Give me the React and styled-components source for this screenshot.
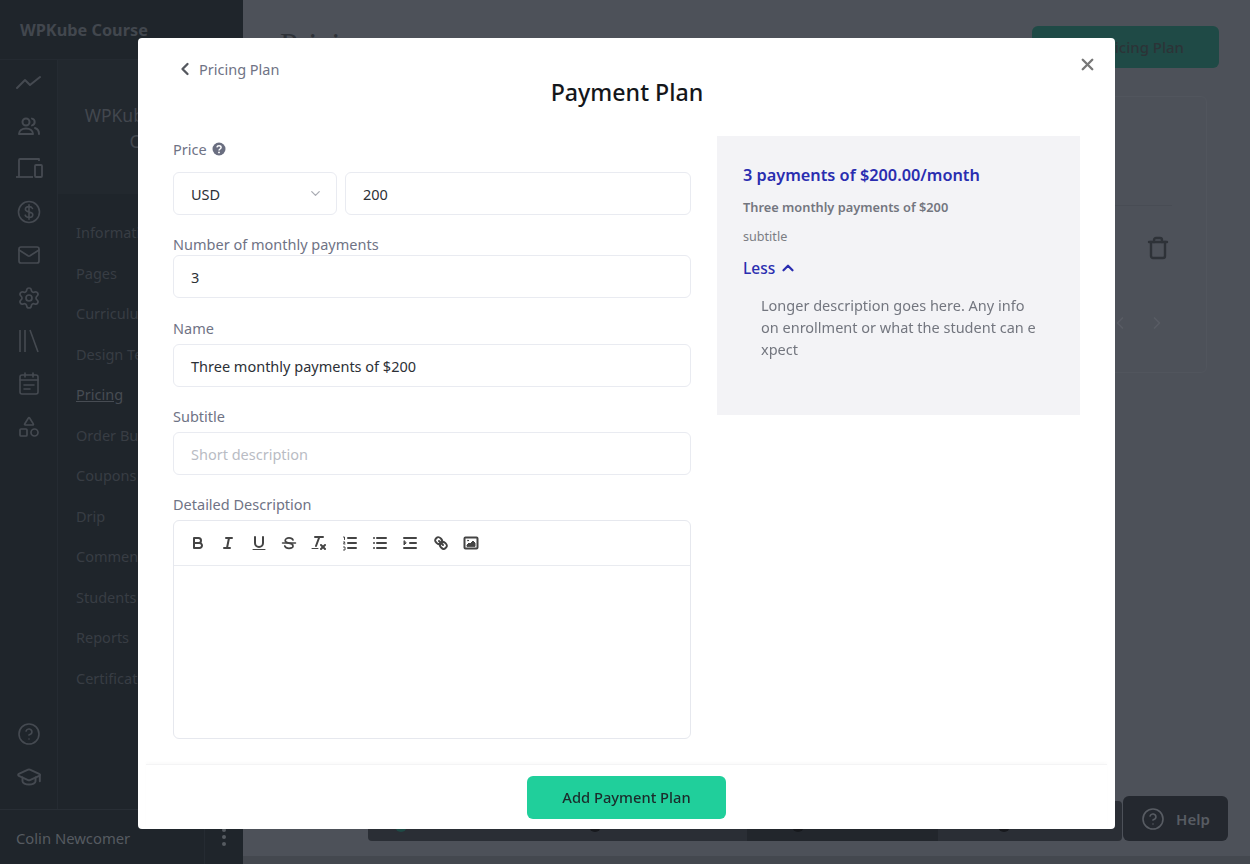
import React from 'react';
import styled, { createGlobalStyle } from 'styled-components';
import {
  ChevronDown,
  ChevronLeft,
  ChevronRight,
  ChevronUp,
  CircleHelp,
  GraduationCap,
  Mail,
  Settings,
  Shapes,
  Trash,
  X,
} from 'lucide-react';

const GlobalStyle = createGlobalStyle`
  * { box-sizing: border-box; }
  html, body { margin: 0; height: 100%; overflow: hidden; }
  body { font-family: 'Noto Sans', 'Open Sans', sans-serif; background: #4d5159; }
`;

const Shell = styled.div`
  display: grid;
  grid-template-columns: 243px 1fr;
  height: 864px;
`;

const Sidebar = styled.aside`
  display: flex;
  flex-direction: column;
  background: #1f252b;
`;

const SideTitle = styled.div`
  height: 60px;
  padding: 19px 20px 0;
  font-size: 16.3px;
  font-weight: 700;
  line-height: 22px;
  color: #42474e;
  border-bottom: 1px solid #242a31;
`;

const SideBody = styled.div`
  flex: 1;
  display: flex;
  min-height: 0;
`;

const Rail = styled.nav`
  width: 58px;
  display: flex;
  flex-direction: column;
  align-items: center;
  padding: 1px 0 11px;
  border-right: 1px solid #252b32;
  color: #454a51;
`;

const RailItem = styled.div`
  height: 43px;
  display: flex;
  align-items: center;
  justify-content: center;
`;

const RailSpacer = styled.div`
  flex: 1;
`;

const SubNav = styled.div`
  flex: 1;
  display: flex;
  flex-direction: column;
`;

const CourseBlock = styled.div`
  height: 134px;
  padding-top: 42px;
  background: #22282e;
  text-align: center;
  font-size: 17.5px;
  line-height: 26px;
  color: #42474e;
`;

const SubLinks = styled.div`
  padding: 18px 0 0 18px;
`;

const SubLink = styled.div`
  height: 40.5px;
  font-size: 14.5px;
  line-height: 40.5px;
  text-decoration: ${(p) => (p.$active ? 'underline' : 'none')};
  color: ${(p) => (p.$active ? '#474c53' : '#383d44')};
`;

const SideFooter = styled.div`
  height: 55px;
  display: flex;
  align-items: center;
  justify-content: space-between;
  border-top: 1px solid #282e35;
  font-size: 14.8px;
  color: #565b61;
`;

const UserName = styled.span`
  padding: 2px 0 0 16px;
`;

const MoreCell = styled.div`
  width: 39px;
  height: 100%;
  display: flex;
  flex-direction: column;
  align-items: center;
  justify-content: center;
  gap: 3px;
  border-left: 1px solid #252b32;
`;

const Dot = styled.i`
  width: 4px;
  height: 4px;
  border-radius: 50%;
  background: #565b61;
`;

const Main = styled.main`
  position: relative;
  display: flex;
  flex-direction: column;
  padding: 26px 31px 0 37px;
  overflow: hidden;
`;

const PageHead = styled.div`
  display: flex;
  justify-content: space-between;
  align-items: flex-start;
`;

const PageTitle = styled.h1`
  margin: 0;
  font-family: 'Liberation Serif', serif;
  font-size: 32px;
  font-weight: 400;
  line-height: 36px;
  color: #2e3238;
`;

const GhostButton = styled.div`
  width: 187px;
  height: 42px;
  border-radius: 6px;
  background: #1f4a46;
  color: #2c3337;
  font-size: 15px;
  font-weight: 500;
  line-height: 42px;
  text-align: center;
`;

const PlanCard = styled.section`
  align-self: flex-end;
  width: 700px;
  height: 277px;
  margin: 28px 12px 0 0;
  padding-top: 108px;
  border: 1px solid #51555d;
  border-radius: 6px;
  color: #2e3238;
`;

const PlanRow = styled.div`
  display: flex;
  justify-content: flex-end;
  padding: 30px 2px 0 0;
  margin-right: 34px;
  border-top: 1px solid #484c54;
`;

const PagerRow = styled.div`
  display: flex;
  justify-content: flex-end;
  gap: 17px;
  margin-top: 53px;
  padding-right: 39px;
  color: #585c64;
`;

const BottomBar = styled.div`
  position: absolute;
  left: 125px;
  bottom: 23px;
  width: 754px;
  height: 40px;
  display: flex;
  border-radius: 4px;
  overflow: hidden;
  background: #2a2e35;
`;

const BarSegment = styled.div`
  width: ${(p) => p.$width}px;
  padding-left: ${(p) => p.$inset}px;
  display: flex;
  align-items: flex-end;
  background: ${(p) => (p.$active ? '#22262c' : 'transparent')};
`;

const BarDot = styled.i`
  width: 12px;
  height: 12px;
  margin-bottom: 9px;
  border-radius: 50%;
  background: ${(p) => p.$color || '#17191d'};
`;

const HelpButton = styled.div`
  position: absolute;
  left: 880px;
  bottom: 23px;
  width: 105px;
  height: 45px;
  display: flex;
  align-items: center;
  justify-content: center;
  gap: 11px;
  border-radius: 6px;
  background: #24282f;
  color: #585c63;
  font-size: 15px;
  font-weight: 600;
`;

const HScroll = styled.div`
  position: absolute;
  left: 0;
  right: 0;
  bottom: 0;
  height: 8px;
  background: #44484f;
`;

const Modal = styled.div`
  position: fixed;
  left: 138px;
  top: 38px;
  width: 977px;
  height: 791px;
  display: flex;
  flex-direction: column;
  background: #fff;
  border-radius: 4px;
`;

const ModalHead = styled.header`
  position: relative;
  height: 98px;
  padding: 19px 0 0 37px;
`;

const BackLink = styled.div`
  display: flex;
  align-items: center;
  gap: 4px;
  height: 24px;
  font-size: 14.5px;
  color: #6f7385;
  svg { color: #55585f; }
`;

const ModalTitle = styled.h2`
  margin: 0;
  font-size: 23.2px;
  font-weight: 500;
  line-height: 22px;
  text-align: center;
  color: #14161a;
  transform: translateX(-18px);
`;

const CloseButton = styled.button`
  position: absolute;
  top: 17px;
  right: 18px;
  padding: 0;
  border: 0;
  background: none;
  color: #777;
  display: flex;
`;

const ModalBody = styled.div`
  flex: 1;
  display: grid;
  grid-template-columns: 518px 363px;
  column-gap: 26px;
  padding: 0 35px;
  min-height: 0;
`;

const FormColumn = styled.div`
  display: flex;
  flex-direction: column;
  padding-top: 2px;
`;

const Field = styled.div`
  display: flex;
  flex-direction: column;
  margin-bottom: ${(p) => p.$gap || 0}px;
`;

const Label = styled.label`
  display: flex;
  align-items: center;
  gap: 5px;
  height: 22px;
  margin-bottom: ${(p) => p.$gap ?? 5}px;
  font-size: 14.5px;
  color: #6f7385;
`;

const InputRow = styled.div`
  display: grid;
  grid-template-columns: 164px 1fr;
  gap: 8px;
`;

const InputBox = styled.div`
  height: 43px;
  display: flex;
  align-items: center;
  justify-content: space-between;
  padding: 0 13px 0 17px;
  border: 1px solid #e9ebf1;
  border-radius: 6px;
  font-size: 14.5px;
  color: ${(p) => (p.$placeholder ? '#b9bcc4' : '#2c3036')};
`;

const Editor = styled.div`
  height: 219px;
  border: 1px solid #e6e8ee;
  border-radius: 6px;
`;

const Toolbar = styled.div`
  height: 45px;
  display: flex;
  align-items: center;
  gap: 2.35px;
  padding-left: 10px;
  border-bottom: 1px solid #e9ebf0;
`;

const ToolIcon = styled.svg.attrs({ viewBox: '0 0 18 18', width: 18, height: 18 })`
  width: 28px;
  padding: 0 5px;
  height: 18px;
  fill: none;
  stroke: #444;
  stroke-width: 2;
  stroke-linecap: round;
  stroke-linejoin: round;
  overflow: visible;
`;

const Preview = styled.aside`
  height: 279px;
  padding: 26px;
  background: #f3f3f6;
`;

const PreviewPrice = styled.div`
  font-size: 16.3px;
  font-weight: 600;
  line-height: 26px;
  color: #2a2db0;
`;

const PreviewName = styled.div`
  margin-top: 9px;
  font-size: 12.8px;
  font-weight: 600;
  line-height: 20px;
  color: #73767f;
`;

const PreviewSubtitle = styled.div`
  margin-top: 10px;
  font-size: 12.6px;
  line-height: 20px;
  color: #7b7d83;
`;

const LessToggle = styled.div`
  display: flex;
  align-items: center;
  gap: 4px;
  margin-top: 9px;
  font-size: 15.5px;
  font-weight: 500;
  line-height: 24px;
  color: #2a2db0;
`;

const PreviewText = styled.p`
  width: 275px;
  margin: 14px 0 0 18px;
  font-size: 14.5px;
  line-height: 22px;
  color: #73767f;
  word-break: break-all;
`;

const ModalFoot = styled.footer`
  height: 65px;
  display: flex;
  justify-content: center;
  padding-top: 11px;
  margin: 0 8px;
  border-top: 1px solid #f4f4f5;
  box-shadow: 0 -2px 3px rgba(0, 0, 0, 0.02);
`;

const SubmitButton = styled.button`
  width: 199px;
  height: 43px;
  padding: 0 0 2px;
  border: 0;
  border-radius: 6px;
  background: #20cf9b;
  color: #1b2b2b;
  font-family: inherit;
  font-size: 14.7px;
  font-weight: 500;
`;

const TrendIcon = () => (
  <svg width="26" height="26" viewBox="0 0 26 26" fill="none" stroke="currentColor" strokeWidth="2" strokeLinejoin="round" strokeLinecap="round">
    <path d="M1 18l8-8 5 5 10-8" />
  </svg>
);

const PeopleIcon = () => (
  <svg width="26" height="24" viewBox="0 0 26 24" fill="none" stroke="currentColor" strokeWidth="2" strokeLinejoin="round" strokeLinecap="round">
    <circle cx="10" cy="8" r="3.5" />
    <path d="M3 20c0-3.500 3-5.500 7-5.500s7 2 7 5.500z" />
    <path d="M16 4.600a3.500 3.500 0 0 1 0 6.800" />
    <path d="M19 14c2.200.7 4 2.700 4 6" />
  </svg>
);

const DevicesIcon = () => (
  <svg width="28" height="26" viewBox="0 0 28 26" fill="none" stroke="currentColor" strokeWidth="1.8" strokeLinejoin="round">
    <path d="M24 5V3H5a1 1 0 0 0-1 1v13" />
    <path d="M1 21h17" />
    <path d="M4 17v4" />
    <rect x="20" y="9" width="7" height="12" rx="1" />
  </svg>
);

const DollarIcon = () => (
  <svg width="24" height="24" viewBox="0 0 24 24" fill="none" stroke="currentColor" strokeWidth="1.6" strokeLinecap="round">
    <circle cx="12" cy="12" r="10.500" />
    <path d="M15.500 8.500c-.6-1.200-2-1.900-3.500-1.900-2 0-3.600 1-3.600 2.700 0 3.700 7.400 1.700 7.400 5.400 0 1.700-1.700 2.700-3.800 2.700-1.700 0-3.200-.8-3.800-2.200M12 4.800v14.400" />
  </svg>
);

const LibraryIcon = () => (
  <svg width="24" height="26" viewBox="0 0 24 26" fill="none" stroke="currentColor" strokeWidth="1.6">
    <path d="M3 2v22M8 2v22M13 2l8 22" />
  </svg>
);

const CalendarIcon = () => (
  <svg width="24" height="26" viewBox="0 0 24 26" fill="none" stroke="currentColor" strokeWidth="1.6" strokeLinecap="round">
    <rect x="3" y="4" width="18" height="19" rx="2" />
    <path d="M3 9h18M8 2v4M16 2v4M7 14h10M7 18h6" />
  </svg>
);

const BoldIcon = () => (
  <ToolIcon>
    <path d="M5 4h4.500A2.500 2.500 0 0 1 12 6.500 2.500 2.500 0 0 1 9.500 9H5z" />
    <path d="M5 9h5.500A2.500 2.500 0 0 1 13 11.500 2.500 2.500 0 0 1 10.500 14H5z" />
  </ToolIcon>
);

const ItalicIcon = () => (
  <ToolIcon>
    <path d="M7 4h6M5 14h6M8 14l2-10" />
  </ToolIcon>
);

const UnderlineIcon = () => (
  <ToolIcon>
    <path d="M5 3v6a4 4 0 0 0 4 4 4 4 0 0 0 4-4V3" />
    <path d="M3 15.500h12" strokeWidth="1" />
  </ToolIcon>
);

const StrikeIcon = () => (
  <ToolIcon>
    <path d="M15.500 9h-13" strokeWidth="1.500" />
    <path d="M13 6c-.5-1.500-2-2.200-4-2.200S5.200 5 5.200 6.600 6.500 8.800 9 9.200s4 1.300 4 2.700-1.700 2.400-4 2.400-3.700-.9-4.200-2.300" strokeWidth="1.700" />
  </ToolIcon>
);

const CleanIcon = () => (
  <ToolIcon>
    <path d="M5 3h8M6 12l3.350-9M11 11l4 4M15 11l-4 4" />
    <path d="M2 14.500h6" strokeWidth="1" />
  </ToolIcon>
);

const OrderedIcon = () => (
  <ToolIcon>
    <path d="M7 4h8M7 9h8M7 14h8" />
    <path d="M2.500 3h1v2.500M2.500 8h1.500l-1.500 2h1.500M2.500 13h1.500v3h-1.500" strokeWidth="1" />
  </ToolIcon>
);

const BulletIcon = () => (
  <ToolIcon>
    <path d="M6 4h9M6 9h9M6 14h9M3 4h.01M3 9h.01M3 14h.01" />
  </ToolIcon>
);

const IndentIcon = () => (
  <ToolIcon>
    <path d="M3 14h12M3 4h12M9 9h6" />
    <path d="M3 7v4l2-2z" fill="#444" strokeWidth="1" />
  </ToolIcon>
);

const LinkIcon = () => (
  <ToolIcon>
    <path d="M7 7l4 4" />
    <path d="M8.900 4.577a3.476 3.476 0 0 1 .36 4.679A3.476 3.476 0 0 1 4.577 8.900C3.185 7.500 2.035 6.400 4.217 4.217S7.500 3.185 8.900 4.577z" />
    <path d="M13.423 9.100a3.476 3.476 0 0 0-4.679-.36 3.476 3.476 0 0 0 .36 4.679c1.392 1.392 2.500 2.542 4.679.36s1.032-3.279-.36-4.679z" />
  </ToolIcon>
);

const ImageIcon = () => (
  <ToolIcon>
    <rect x="2.500" y="3.500" width="13" height="11" rx="1" />
    <path d="M5 12v-1l2-2 1 1 3-3 2 2v3z" fill="#444" strokeWidth="1" />
    <circle cx="6" cy="6.500" r=".5" strokeWidth="1" />
  </ToolIcon>
);

const HelpBadge = () => (
  <svg width="14" height="14" viewBox="0 0 14 14">
    <circle cx="7" cy="7" r="6.500" fill="#6a6e80" />
    <path d="M4.900 5.400c.2-1.100 1-1.600 2.100-1.600 1.200 0 2.100.7 2.100 1.700 0 1.500-2.100 1.500-2.100 3" fill="none" stroke="#fff" strokeWidth="1.500" />
    <circle cx="7" cy="10.400" r=".95" fill="#fff" />
  </svg>
);

const subLinks = [
  'Information',
  'Pages',
  'Curriculum',
  'Design Templates',
  'Pricing',
  'Order Bumps',
  'Coupons',
  'Drip',
  'Comments',
  'Students',
  'Reports',
  'Certificates',
];

const tools = [BoldIcon, ItalicIcon, UnderlineIcon, StrikeIcon, CleanIcon, OrderedIcon, BulletIcon, IndentIcon, LinkIcon, ImageIcon];

export default function App() {
  return (
    <>
      <GlobalStyle />
      <Shell>
        <Sidebar>
          <SideTitle>WPKube Course</SideTitle>
          <SideBody>
            <Rail>
              <RailItem><TrendIcon /></RailItem>
              <RailItem><PeopleIcon /></RailItem>
              <RailItem><DevicesIcon /></RailItem>
              <RailItem><DollarIcon /></RailItem>
              <RailItem><Mail size={24} strokeWidth={1.7} /></RailItem>
              <RailItem><Settings size={24} strokeWidth={1.7} /></RailItem>
              <RailItem><LibraryIcon /></RailItem>
              <RailItem><CalendarIcon /></RailItem>
              <RailItem><Shapes size={24} strokeWidth={1.7} /></RailItem>
              <RailSpacer />
              <RailItem><CircleHelp size={24} strokeWidth={1.6} /></RailItem>
              <RailItem><GraduationCap size={26} strokeWidth={1.8} /></RailItem>
            </Rail>
            <SubNav>
              <CourseBlock>WPKube Course<br />Class</CourseBlock>
              <SubLinks>
                {subLinks.map((link) => (
                  <SubLink key={link} $active={link === 'Pricing'}>{link}</SubLink>
                ))}
              </SubLinks>
            </SubNav>
          </SideBody>
          <SideFooter>
            <UserName>Colin Newcomer</UserName>
            <MoreCell><Dot /><Dot /><Dot /></MoreCell>
          </SideFooter>
        </Sidebar>
        <Main>
          <PageHead>
            <PageTitle>Pricing</PageTitle>
            <GhostButton>Add Pricing Plan</GhostButton>
          </PageHead>
          <PlanCard>
            <PlanRow><Trash size={24} strokeWidth={2.4} /></PlanRow>
            <PagerRow>
              <ChevronLeft size={20} />
              <ChevronRight size={20} />
            </PagerRow>
          </PlanCard>
          <BottomBar>
            <BarSegment $width={176} $inset={27}><BarDot $color="#1f4a46" /></BarSegment>
            <BarSegment $width={203} $inset={45}><BarDot /></BarSegment>
            <BarSegment $width={191} $inset={45} $active><BarDot /></BarSegment>
            <BarSegment $width={184} $inset={60}><BarDot /></BarSegment>
          </BottomBar>
          <HelpButton><CircleHelp size={24} strokeWidth={1.6} />Help</HelpButton>
          <HScroll />
        </Main>
      </Shell>
      <Modal>
        <ModalHead>
          <BackLink><ChevronLeft size={20} strokeWidth={2.8} />Pricing Plan</BackLink>
          <ModalTitle>Payment Plan</ModalTitle>
          <CloseButton><X size={19} strokeWidth={3} /></CloseButton>
        </ModalHead>
        <ModalBody>
          <FormColumn>
            <Field $gap={18}>
              <Label $gap={12}>Price <HelpBadge /></Label>
              <InputRow>
                <InputBox>USD<ChevronDown size={15} color="#a9acb3" /></InputBox>
                <InputBox>200</InputBox>
              </InputRow>
            </Field>
            <Field $gap={19}>
              <Label $gap={0}>Number of monthly payments</Label>
              <InputBox>3</InputBox>
            </Field>
            <Field $gap={18}>
              <Label>Name</Label>
              <InputBox>Three monthly payments of $200</InputBox>
            </Field>
            <Field $gap={18}>
              <Label>Subtitle</Label>
              <InputBox $placeholder>Short description</InputBox>
            </Field>
            <Field>
              <Label>Detailed Description</Label>
              <Editor>
                <Toolbar>
                  {tools.map((Tool, i) => <Tool key={i} />)}
                </Toolbar>
              </Editor>
            </Field>
          </FormColumn>
          <Preview>
            <PreviewPrice>3 payments of $200.00/month</PreviewPrice>
            <PreviewName>Three monthly payments of $200</PreviewName>
            <PreviewSubtitle>subtitle</PreviewSubtitle>
            <LessToggle>Less <ChevronUp size={18} strokeWidth={3} /></LessToggle>
            <PreviewText>Longer description goes here. Any info on enrollment or what the student can expect</PreviewText>
          </Preview>
        </ModalBody>
        <ModalFoot>
          <SubmitButton>Add Payment Plan</SubmitButton>
        </ModalFoot>
      </Modal>
    </>
  );
}
